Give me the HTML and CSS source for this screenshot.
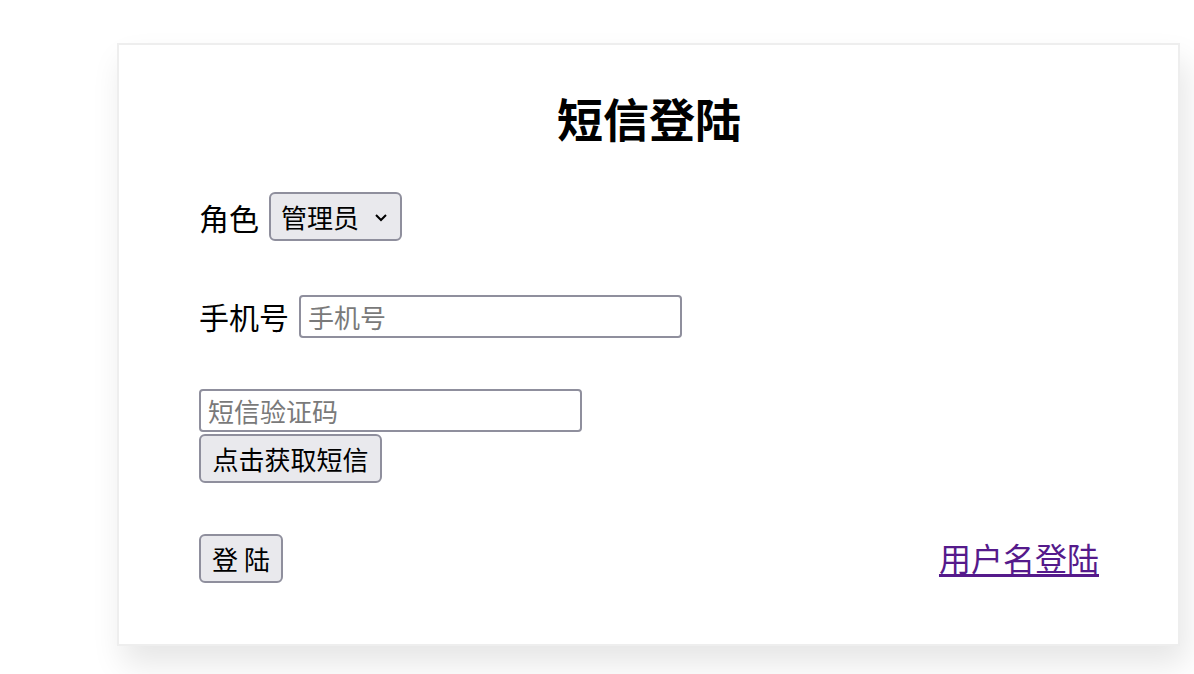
FILE: index.html
```html
<!DOCTYPE html>
<html lang="zh-CN">
<head>
<meta charset="utf-8">
<title>短信登陆</title>
<link rel="stylesheet" href="styles.css">
</head>
<body>
<div class="card">
  <h1 class="title">短信登陆</h1>
  <div class="row row-role">
    <label class="label">角色</label>
    <select class="select">
      <option>管理员</option>
      <option>用户</option>
    </select>
  </div>
  <div class="row row-phone">
    <label class="label">手机号</label>
    <input class="input" type="text" placeholder="手机号">
  </div>
  <div class="code-block">
    <input class="input" type="text" placeholder="短信验证码">
    <button class="btn btn-sms">点击获取短信</button>
  </div>
  <div class="row row-actions">
    <button class="btn btn-login">登 陆</button>
    <a class="link" href="#">用户名登陆</a>
  </div>
</div>
</body>
</html>
```
FILE: styles.css
```css
html, body {
  margin: 0;
  padding: 0;
  background: #ffffff;
}
body {
  font-family: "Noto Sans CJK SC", "Liberation Serif", serif;
  color: #000;
  min-height: 674px;
}
.card {
  box-sizing: border-box;
  width: 1063px;
  height: 603px;
  margin: 43px 0 28px 117px;
  padding: 44px 79px 0 80px;
  border: 2px solid #eeeeee;
  background: #fff;
  box-shadow: 6px 18px 30px rgba(0, 0, 0, 0.1);
  display: flex;
  flex-direction: column;
}
.title {
  margin: 0;
  font-size: 46px;
  line-height: 56px;
  font-weight: 600;
  text-align: center;
}
.row {
  display: flex;
  align-items: center;
}
.row-role {
  margin-top: 47px;
  height: 49px;
}
.row-phone {
  margin-top: 54px;
  height: 42px;
}
.label {
  font-size: 30px;
  line-height: 40px;
  margin-right: 10px;
}
.select {
  -webkit-appearance: none;
  appearance: none;
  box-sizing: border-box;
  width: 133px;
  height: 49px;
  padding: 0 30px 0 10px;
  font-family: "Noto Sans CJK SC", sans-serif;
  font-size: 26px;
  color: #000;
  background-color: #e9e9ed;
  background-image: url("data:image/svg+xml;utf8,<svg xmlns='http://www.w3.org/2000/svg' width='14' height='10' viewBox='0 0 14 10'><path d='M2 3 L7 8 L12 3' fill='none' stroke='black' stroke-width='2'/></svg>");
  background-repeat: no-repeat;
  background-position: right 12px center;
  border: 2px solid #8f8f9d;
  border-radius: 6px;
}
.input {
  box-sizing: border-box;
  width: 383px;
  height: 43px;
  padding: 0 7px;
  font-family: "Noto Sans CJK SC", sans-serif;
  font-size: 26px;
  border: 2px solid #8f8f9d;
  border-radius: 4px;
  background: #fff;
  outline: none;
}
.input::placeholder {
  color: #7a7a7a;
}
.code-block {
  margin-top: 52px;
  display: flex;
  flex-direction: column;
  align-items: flex-start;
  gap: 2px;
}
.btn {
  box-sizing: border-box;
  height: 49px;
  padding: 0 10px;
  font-family: "Noto Sans CJK SC", sans-serif;
  font-size: 26px;
  color: #000;
  background: #e9e9ed;
  border: 2px solid #8f8f9d;
  border-radius: 6px;
}
.btn-sms {
  width: 183px;
  padding: 0;
}
.btn-login {
  width: 84px;
  padding: 0;
}
.row-actions {
  margin-top: 51px;
  height: 49px;
  justify-content: space-between;
}
.link {
  font-size: 32px;
  line-height: 40px;
  color: #551a8b;
  text-decoration: underline;
  text-underline-offset: 3px;
  margin-top: -4px;
}
```
